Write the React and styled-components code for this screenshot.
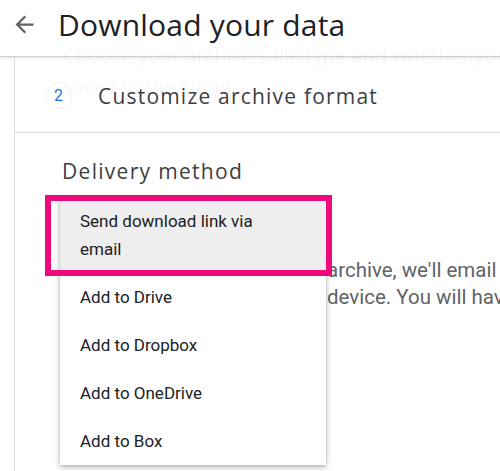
import styled, { createGlobalStyle } from 'styled-components';
import { MdArrowBack } from 'react-icons/md';

const GlobalStyle = createGlobalStyle`
  html, body {
    margin: 0;
    padding: 0;
    background: #fff;
    font-family: Roboto, "Liberation Sans", Arial, sans-serif;
    overflow: hidden;
  }
`;

const headingFont = `"Open Sans", Roboto, "Liberation Sans", sans-serif`;

const deliveryOptions = [
  'Send download link via email',
  'Add to Drive',
  'Add to Dropbox',
  'Add to OneDrive',
  'Add to Box'
];

export default function App() {
  return (
    <>
      <GlobalStyle />
      <Page>
        <Header>
          <BackButton aria-label="Back">
            <MdArrowBack size={27} />
          </BackButton>
          <Title>Download your data</Title>
        </Header>

        <Ghost aria-hidden="true">
          Choose your archive's file type and whether you want it
          <br />
          saved in the cloud
        </Ghost>

        <Card>
          <StepRow>
            <StepNumber>2</StepNumber>
            <StepTitle>Customize archive format</StepTitle>
          </StepRow>

          <Section>
            <SectionTitle>Delivery method</SectionTitle>
            <DeliveryBlock>
              <SelectField />
              <Description>
                <span>archive, we'll email you a download link</span>
                <span>device. You will have one week to download</span>
              </Description>

              <Menu>
                {deliveryOptions.map((option, i) => (
                  <MenuItem key={option} $selected={i === 0}>
                    {i === 0 ? (
                      <>
                        Send download link via
                        <br />
                        email
                      </>
                    ) : (
                      option
                    )}
                  </MenuItem>
                ))}
              </Menu>
              <Highlight />
            </DeliveryBlock>
          </Section>
        </Card>
      </Page>
    </>
  );
}

const Page = styled.div`
  position: relative;
  width: 500px;
  height: 471px;
  overflow: hidden;
  background: #fff;
`;

const Header = styled.header`
  display: flex;
  align-items: center;
  height: 57px;
  box-sizing: border-box;
  padding: 0 0 7px 11px;
  border-bottom: 1px solid #d0d0d0;
  box-shadow: 0 1px 3px rgba(0, 0, 0, 0.12);
  background: #fff;
`;

const BackButton = styled.button`
  display: flex;
  align-items: center;
  justify-content: center;
  padding: 0;
  border: none;
  background: none;
  color: #5f6368;
  cursor: pointer;
`;

const Title = styled.h1`
  margin: 0 0 0 20px;
  font-family: ${headingFont};
  font-size: 30px;
  font-weight: 400;
  letter-spacing: 0.2px;
  color: #202124;
`;

const Ghost = styled.div`
  position: absolute;
  top: 40px;
  left: 63px;
  font-family: ${headingFont};
  font-size: 20px;
  line-height: 31px;
  color: rgba(0, 0, 0, 0.045);
  white-space: nowrap;
  pointer-events: none;
`;

const Card = styled.div`
  margin-left: 14px;
  border-left: 1px solid #dadce0;
  min-height: 420px;
`;

const StepRow = styled.div`
  display: flex;
  align-items: center;
  height: 73px;
  padding: 2px 0 0 30px;
  border-bottom: 1px solid #dadce0;
`;

const StepNumber = styled.span`
  display: flex;
  align-items: center;
  justify-content: center;
  width: 25px;
  height: 25px;
  border-radius: 50%;
  border: 1px solid #f1f3f4;
  color: #1a73e8;
  font-size: 16px;
`;

const StepTitle = styled.span`
  margin-left: 26px;
  font-family: ${headingFont};
  font-size: 21px;
  letter-spacing: 1.2px;
  color: #3c4043;
`;

const Section = styled.section`
  padding: 24px 0 0 47px;
`;

const SectionTitle = styled.h2`
  margin: 0;
  font-family: ${headingFont};
  font-size: 21px;
  line-height: 28px;
  font-weight: 400;
  letter-spacing: 1.3px;
  color: #3c4043;
`;

const DeliveryBlock = styled.div`
  position: relative;
  margin-top: 12px;
`;

const SelectField = styled.div`
  width: 264px;
  height: 56px;
  box-sizing: border-box;
  border: 1px solid #dadce0;
  border-radius: 4px;
  margin-bottom: 4px;
`;

const Description = styled.p`
  display: flex;
  flex-direction: column;
  margin: 0 0 0 265px;
  font-size: 20.5px;
  line-height: 27px;
  color: #5f6368;
  white-space: nowrap;
`;

const Menu = styled.ul`
  position: absolute;
  top: 0;
  left: -2px;
  width: 266px;
  margin: 0;
  padding: 0;
  list-style: none;
  background: #fff;
  box-shadow: 0 2px 6px rgba(0, 0, 0, 0.28), 0 1px 2px rgba(0, 0, 0, 0.12);
`;

const MenuItem = styled.li`
  padding: 10px 20px;
  font-size: 17px;
  line-height: 28px;
  color: #202124;
  background: ${(p) => (p.$selected ? '#eeeeee' : '#fff')};
`;

const Highlight = styled.div`
  position: absolute;
  top: -2px;
  left: -17px;
  width: 287px;
  height: 81px;
  box-sizing: border-box;
  border: 6px solid #ee0a7b;
  pointer-events: none;
`;
